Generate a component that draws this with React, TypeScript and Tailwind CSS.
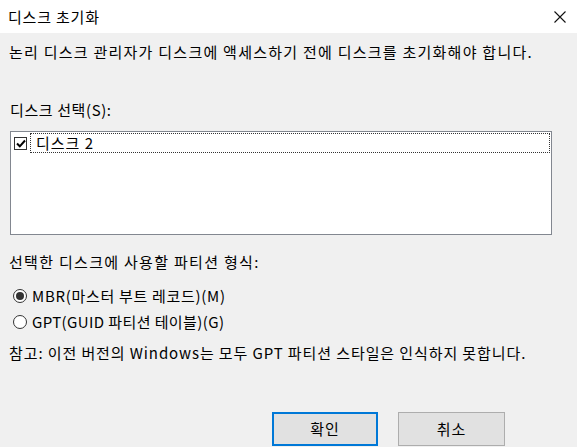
import { useState } from 'react';

const font = { fontFamily: '"Noto Sans CJK KR", "Noto Sans", sans-serif' };

function CloseIcon() {
  return (
    <svg width="12" height="12" viewBox="0 0 12 12" className="block">
      <path d="M0.5 0.5 L11.5 11.5 M11.5 0.5 L0.5 11.5" stroke="#111" strokeWidth="1.1" fill="none" />
    </svg>
  );
}

function Radio({ checked }: { checked: boolean }) {
  return (
    <span className="flex h-[14px] w-[14px] items-center justify-center rounded-full border border-[#333] bg-white">
      {checked && <span className="h-[8px] w-[8px] rounded-full bg-[#333]" />}
    </span>
  );
}

export default function App() {
  const [scheme, setScheme] = useState<'mbr' | 'gpt'>('mbr');

  return (
    <div className="h-[447px] w-[577px] overflow-hidden bg-[#f0f0f0] text-[15px] text-black" style={font}>
      {/* title bar */}
      <div className="flex h-[33px] items-center justify-between bg-white pl-[8px] pr-[11px]">
        <span className="leading-[20px] tracking-[0.8px]">디스크 초기화</span>
        <CloseIcon />
      </div>

      <div className="flex flex-col pl-[9px] pr-[25px]">
        <p className="mt-[9px] leading-[20px] tracking-[1.25px]">
          논리 디스크 관리자가 디스크에 액세스하기 전에 디스크를 초기화해야 합니다.
        </p>

        <p className="mt-[38px] pl-[1px] leading-[20px] tracking-[0.6px]">디스크 선택(S):</p>

        {/* disk list */}
        <div className="ml-[1px] mt-[11px] h-[104px] w-[542px] border border-[#828790] bg-white p-[1px]">
          <div className="flex h-[20px] items-center">
            <span className="mx-[2px] flex h-[13px] w-[13px] items-center justify-center border border-[#333] bg-white">
              <svg width="10" height="9" viewBox="0 0 10 9">
                <path d="M1 4.5 L3.8 7.3 L9 1.5" stroke="#000" strokeWidth="2" fill="none" />
              </svg>
            </span>
            <span className="ml-[1px] flex h-[20px] flex-1 items-center border border-dotted border-[#333] pl-[5px] leading-[18px] tracking-[1px]">
              디스크 2
            </span>
          </div>
        </div>

        <p className="mt-[17px] leading-[20px] tracking-[1.3px]">선택한 디스크에 사용할 파티션 형식:</p>

        <label className="mt-[14px] flex h-[20px] items-center gap-[5px] pl-[4px]" onClick={() => setScheme('mbr')}>
          <Radio checked={scheme === 'mbr'} />
          <span className="leading-[20px] tracking-[0.7px]">MBR(마스터 부트 레코드)(M)</span>
        </label>
        <label className="mt-[6px] flex h-[20px] items-center gap-[5px] pl-[4px]" onClick={() => setScheme('gpt')}>
          <Radio checked={scheme === 'gpt'} />
          <span className="leading-[20px] tracking-[0.4px]">GPT(GUID 파티션 테이블)(G)</span>
        </label>

        <p className="mt-[11px] leading-[20px] tracking-[0.9px]">
          참고: 이전 버전의 Windows는 모두 GPT 파티션 스타일은 인식하지 못합니다.
        </p>

        <div className="mt-[49px] flex justify-end gap-[20px] pr-[47px]">
          <button className="h-[34px] w-[106px] border-2 border-[#0078d7] bg-[#e1e1e1] text-[15px] tracking-[1px]">확인</button>
          <button className="h-[34px] w-[107px] border border-[#adadad] bg-[#e1e1e1] text-[15px] tracking-[1px]">취소</button>
        </div>
      </div>
    </div>
  );
}
